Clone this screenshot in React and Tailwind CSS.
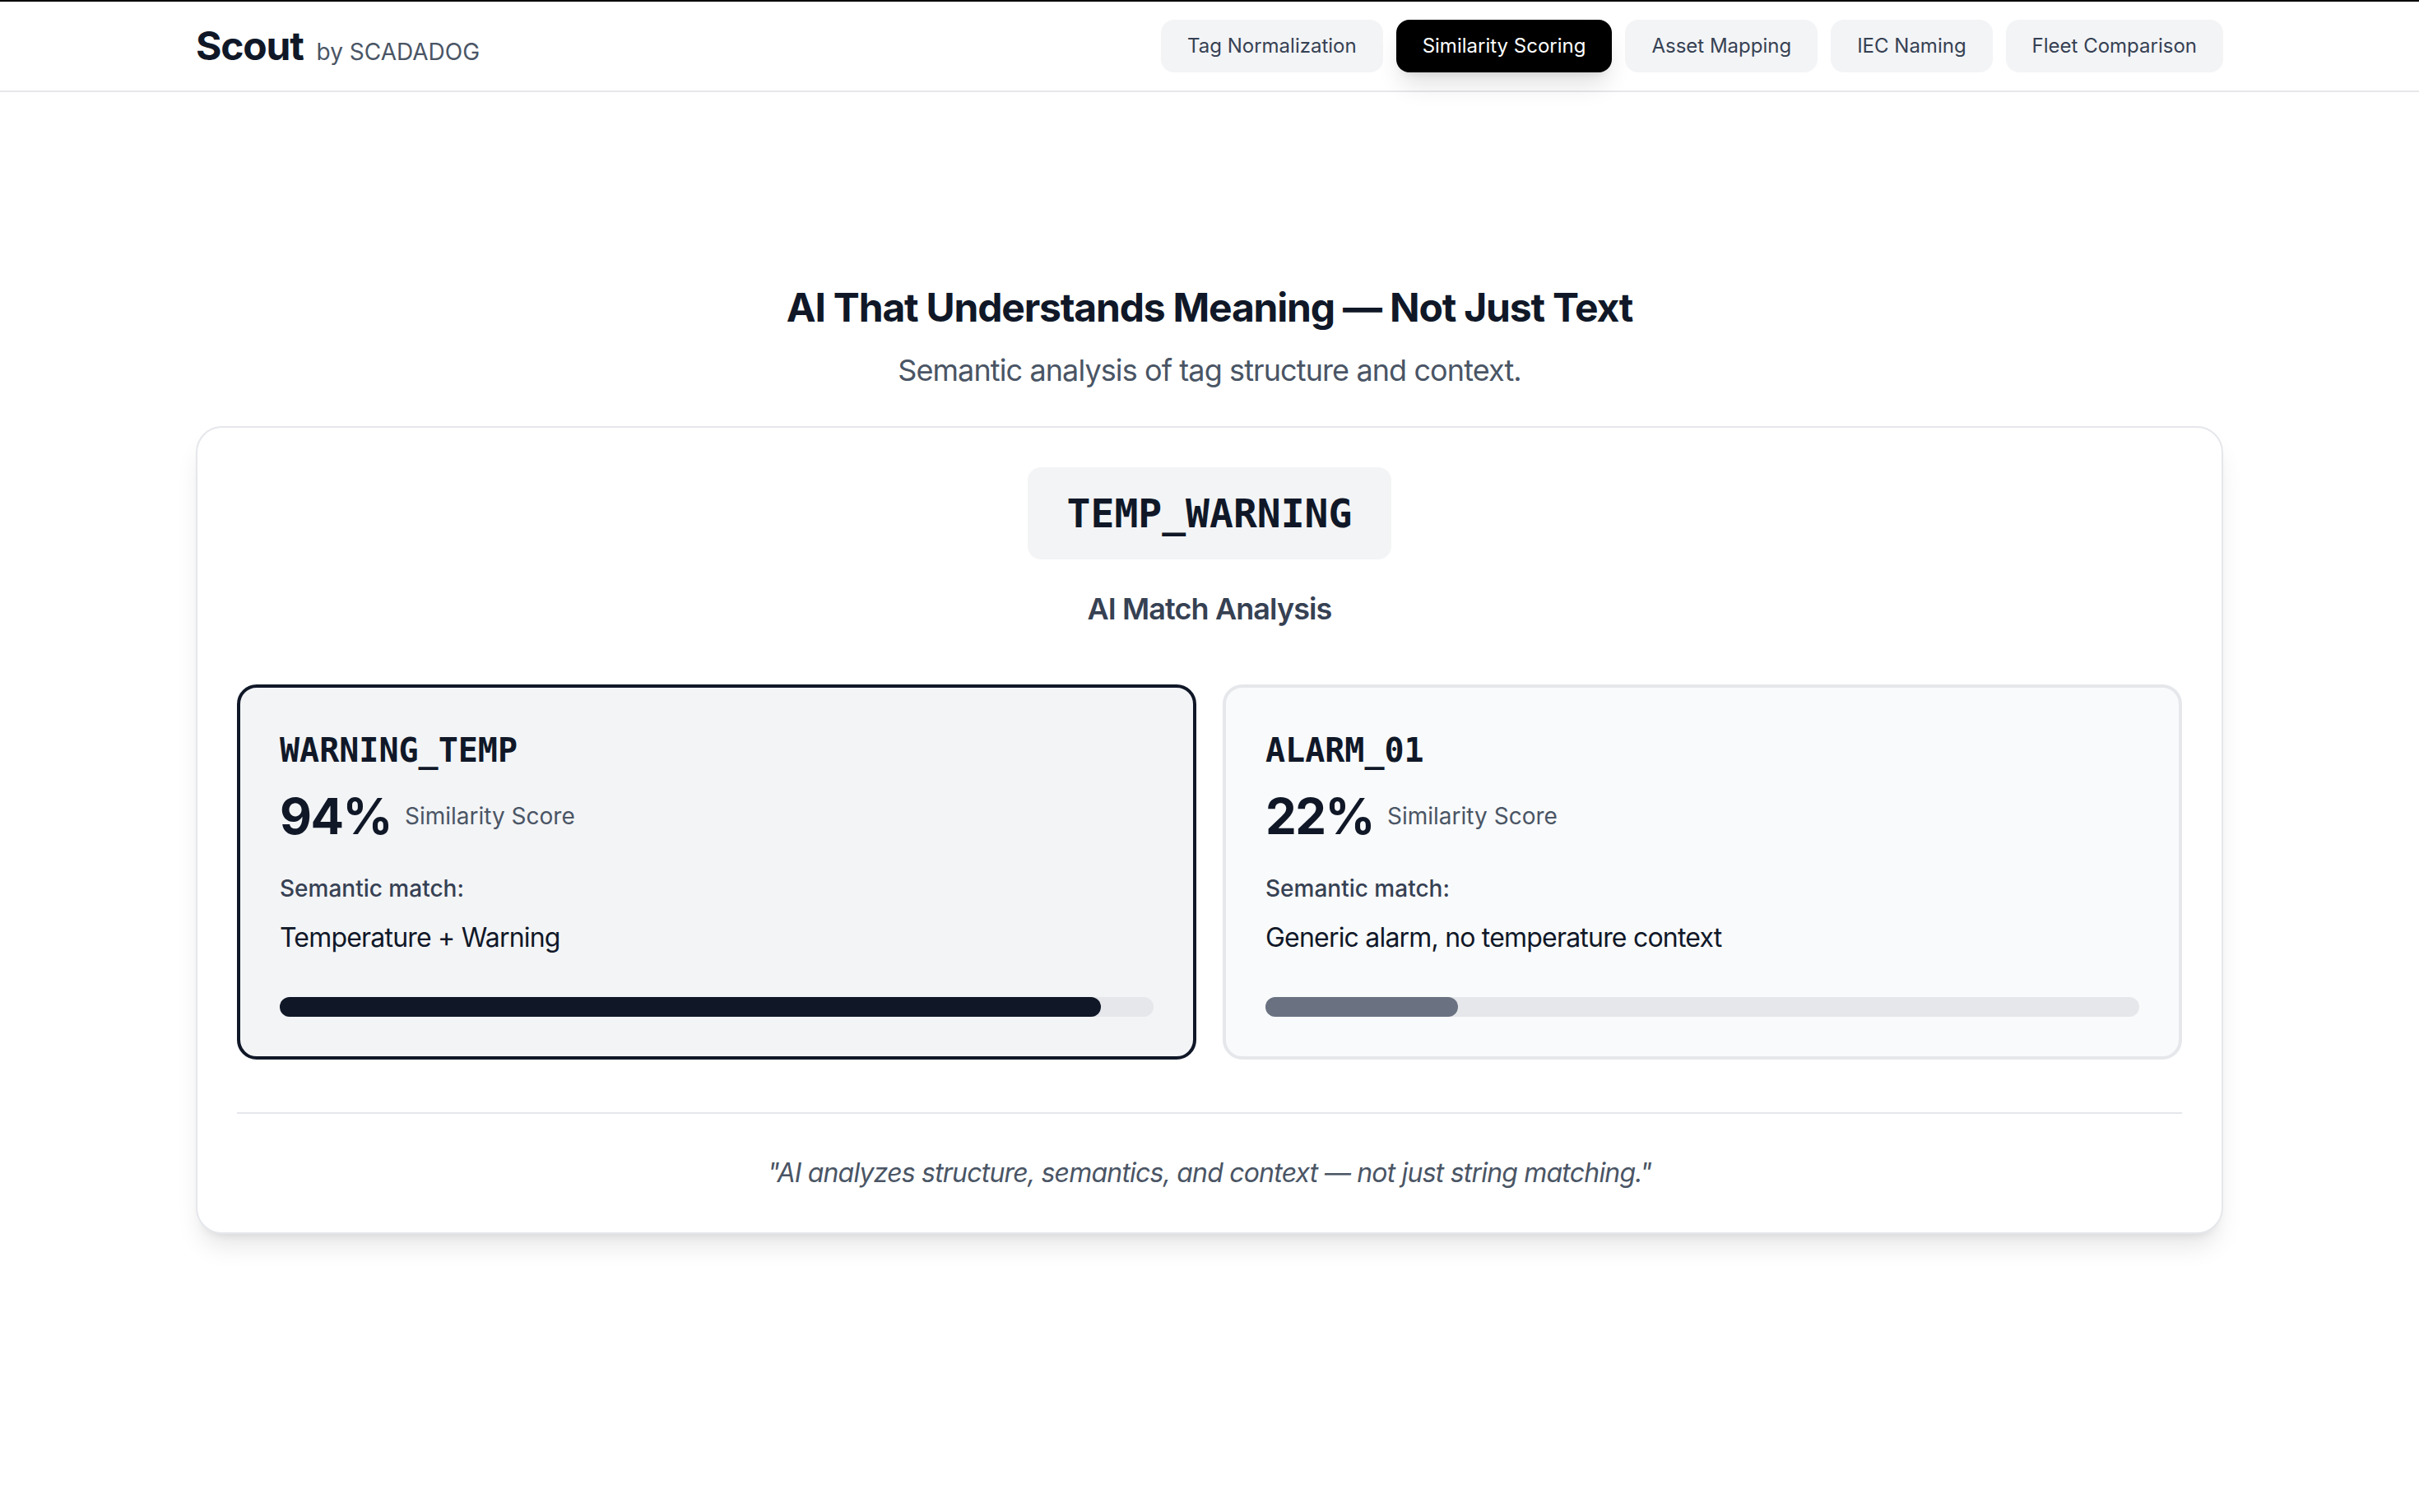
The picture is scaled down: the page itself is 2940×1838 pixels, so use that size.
import React, { useState } from "react";

const tabs = ["Tag Normalization", "Similarity Scoring", "Asset Mapping", "IEC Naming", "Fleet Comparison"];

const matches = [
  {
    tag: "WARNING_TEMP",
    score: 94,
    meaning: "Temperature + Warning",
    best: true,
  },
  {
    tag: "ALARM_01",
    score: 22,
    meaning: "Generic alarm, no temperature context",
    best: false,
  },
];

const MatchCard = ({ match }) => {
  return (
    <div
      className={
        match.best
          ? "rounded-3xl border-4 border-gray-900 bg-gray-100 p-12"
          : "rounded-3xl border-4 border-gray-200 bg-gray-50 p-12"
      }
    >
      <div className="font-['DejaVu_Sans_Mono',monospace] text-[40px] leading-14 font-bold text-gray-900">
        {match.tag}
      </div>
      <div className="mt-4 flex items-center gap-4">
        <span className="text-6xl leading-18 font-bold tracking-tight text-gray-900">{match.score}%</span>
        <span className="text-[28px] leading-10 text-gray-600">Similarity Score</span>
      </div>
      <div className="mt-8 text-[28px] leading-10 font-medium text-gray-700">Semantic match:</div>
      <div className="mt-4 text-[32px] leading-12 tracking-tight text-gray-900">{match.meaning}</div>
      <div className="mt-12 h-6 w-full rounded-full bg-gray-200">
        <div
          className={match.best ? "h-6 rounded-full bg-gray-900" : "h-6 rounded-full bg-gray-500"}
          style={{ width: `${match.score}%` }}
        />
      </div>
    </div>
  );
};

const App = () => {
  const [active, setActive] = useState("Similarity Scoring");

  return (
    <div className="min-h-screen bg-white font-['Inter','Liberation_Sans',sans-serif] text-gray-900">
      <header className="h-28 border-t-2 border-b-2 border-t-black border-b-gray-200 bg-white">
        <div className="mx-auto flex h-full max-w-[2560px] items-center justify-between px-12">
          <div className="flex items-baseline">
            <span className="text-5xl leading-16 font-bold tracking-tight text-gray-900">Scout</span>
            <span className="ml-4 text-[28px] leading-10 text-gray-600">by SCADADOG</span>
          </div>
          <nav className="flex gap-4">
            {tabs.map((tab) => (
              <button
                key={tab}
                onClick={() => setActive(tab)}
                className={
                  tab === active
                    ? "rounded-2xl bg-black px-8 py-4 text-2xl leading-8 text-white shadow-[0_20px_30px_-6px_rgba(0,0,0,0.12),0_8px_12px_-8px_rgba(0,0,0,0.12)]"
                    : "rounded-2xl bg-gray-100 px-8 py-4 text-2xl leading-8 text-gray-700"
                }
              >
                {tab}
              </button>
            ))}
          </nav>
        </div>
      </header>

      <main className="mx-auto max-w-[2560px] px-12 pt-[230px] pb-32">
        <h2 className="text-center text-5xl leading-16 font-bold tracking-tight text-gray-900">
          AI That Understands Meaning — Not Just Text
        </h2>
        <p className="mt-4 text-center text-4xl leading-14 tracking-tight text-gray-600">
          Semantic analysis of tag structure and context.
        </p>

        <div className="mt-10 rounded-[32px] border-2 border-gray-200 bg-white p-12 shadow-[0_20px_30px_-6px_rgba(0,0,0,0.1),0_8px_12px_-8px_rgba(0,0,0,0.1)]">
          <div className="flex justify-center">
            <div className="rounded-2xl bg-gray-100 px-12 py-6 font-['DejaVu_Sans_Mono',monospace] text-5xl leading-16 font-bold text-gray-900">
              TEMP_WARNING
            </div>
          </div>
          <div className="mt-8 text-center text-4xl leading-14 font-semibold tracking-tight text-gray-700">
            AI Match Analysis
          </div>

          <div className="mt-16 grid grid-cols-2 gap-8">
            {matches.map((m) => (
              <MatchCard key={m.tag} match={m} />
            ))}
          </div>

          <div className="mt-16 border-t-2 border-gray-200 pt-12 text-center text-[32px] leading-12 tracking-tight italic text-gray-600">
            "AI analyzes structure, semantics, and context — not just string matching."
          </div>
        </div>
      </main>
    </div>
  );
};

export default App;
